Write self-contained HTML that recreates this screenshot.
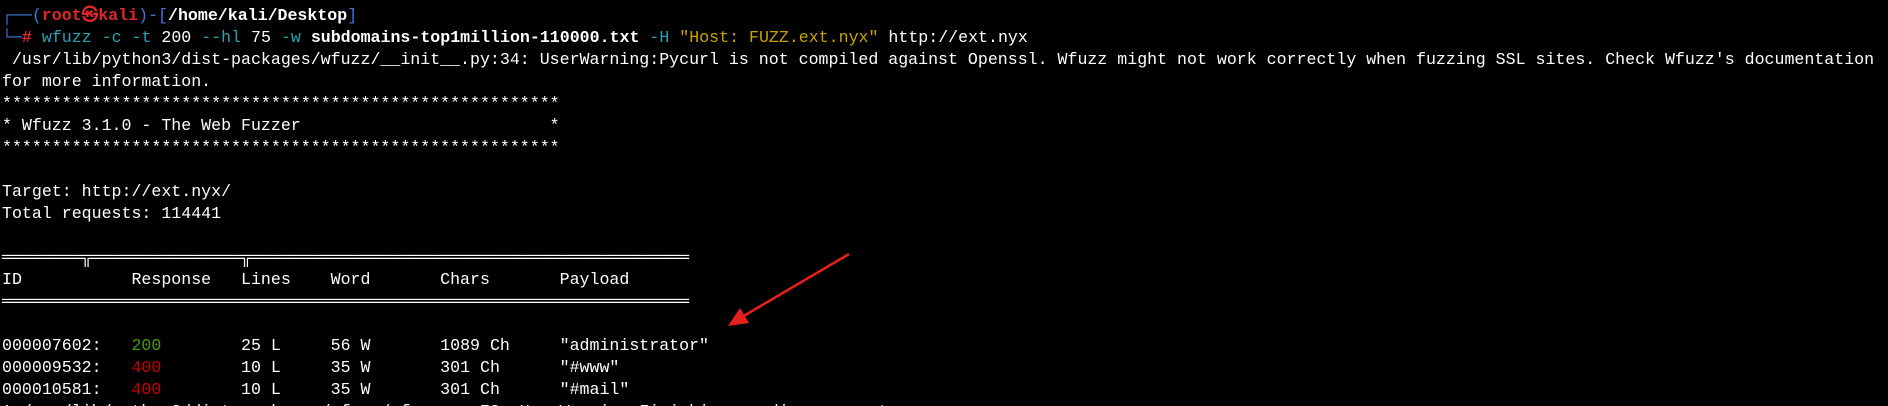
<!DOCTYPE html>
<html><head><meta charset="utf-8"><style>
html,body{margin:0;padding:0;background:#000;width:1888px;height:406px;overflow:hidden}
pre{margin:0;padding:5px 0 0 2px;font-family:"Liberation Mono","DejaVu Sans Mono",monospace;font-size:16.6px;line-height:22px;color:#fff;white-space:pre}
.b{color:#3b78d8}.r{color:#e0262b;font-weight:bold}.w{color:#fff;font-weight:bold}
.c{color:#2aa1b3}.y{color:#c9a400}.g{color:#4e9a06}.rd{color:#cc0000}
svg{position:absolute;left:0;top:0}
</style></head><body>
<pre><span class="b">┌──(</span><span class="r">root㉿kali</span><span class="b">)-[</span><span class="w">/home/kali/Desktop</span><span class="b">]</span>
<span class="b">└─</span><span class="r">#</span> <span class="c">wfuzz</span> <span class="c">-c</span> <span class="c">-t</span> 200 <span class="c">--hl</span> 75 <span class="c">-w</span> <span class="w">subdomains-top1million-110000.txt</span> <span class="c">-H</span> <span class="y">"Host: FUZZ.ext.nyx"</span> http://ext.nyx
 /usr/lib/python3/dist-packages/wfuzz/__init__.py:34: UserWarning:Pycurl is not compiled against Openssl. Wfuzz might not work correctly when fuzzing SSL sites. Check Wfuzz's documentation
for more information.
********************************************************
* Wfuzz 3.1.0 - The Web Fuzzer                         *
********************************************************

Target: http://ext.nyx/
Total requests: 114441

════════╦═══════════════╦════════════════════════════════════════════
ID           Response   Lines    Word       Chars       Payload
═════════════════════════════════════════════════════════════════════

000007602:   <span class="g">200</span>        25 L     56 W       1089 Ch     "administrator"
000009532:   <span class="rd">400</span>        10 L     35 W       301 Ch      "#www"
000010581:   <span class="rd">400</span>        10 L     35 W       301 Ch      "#mail"
^ /usr/lib/python3/dist-packages/wfuzz/wfuzz.py:78: UserWarning:Finishing pending requests...</pre>
<svg width="1888" height="406"><line x1="849" y1="254" x2="742" y2="317" stroke="#e8201c" stroke-width="2.5"/><polygon points="728,326 740,308 749,323" fill="#e8201c"/></svg>
</body></html>
